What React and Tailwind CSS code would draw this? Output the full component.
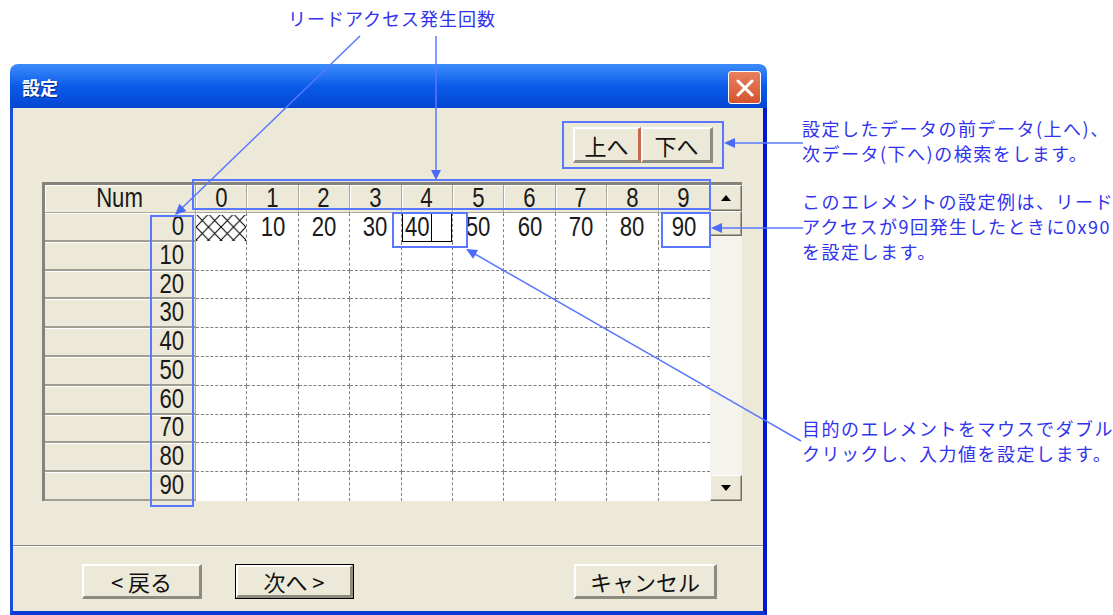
import React from 'react'

const cols = ['0', '1', '2', '3', '4', '5', '6', '7', '8', '9']
const rowLabels = ['0', '10', '20', '30', '40', '50', '60', '70', '80', '90']
const firstRow = ['x', '10', '20', '30', '40', '50', '60', '70', '80', '90']

const raised = 'border-t-2 border-l-2 border-t-white border-l-white border-r-[3px] border-b-[3px] border-r-[#8d8b80] border-b-[#8d8b80] bg-[#ece9d8]'

// the grid text is a narrow bitmap-ish face, squeeze Liberation Sans to match
const Narrow = ({ children, origin = 'origin-center' }) => (
    <span className={'inline-block scale-x-[0.82] ' + origin}>{children}</span>
)

const Hatch = () => (
    <svg width="50" height="28" className="block">
        <defs>
            <pattern id="hatch" width="12.5" height="13" patternUnits="userSpaceOnUse">
                <path d="M0 0 L12.5 13 M12.5 0 L0 13" stroke="#111" strokeWidth="1.2" />
            </pattern>
        </defs>
        <rect x="0" y="1" width="50" height="26" fill="url(#hatch)" />
    </svg>
)

const ScrollBtn = ({ up }) => (
    <div className="flex h-[26px] items-center justify-center border border-t-white border-l-white border-r-[#716f64] border-b-[#716f64] bg-[#ece9d8] shadow-[inset_-1px_-1px_0_#aca899]">
        <svg width="10" height="6">
            {up ? <polygon points="5,0 10,6 0,6" fill="#000" /> : <polygon points="0,0 10,0 5,6" fill="#000" />}
        </svg>
    </div>
)

const DataCell = ({ value, col, last }) => {
    const edges = (col < 9 ? 'border-r ' : '') + (last ? '' : 'border-b')
    if (value === 'x') {
        return (
            <div className={'flex items-center border-dashed border-[#808080] ' + edges}>
                <Hatch />
            </div>
        )
    }
    if (value === '40') {
        return (
            <div className={'flex items-stretch border-dashed border-[#808080] ' + edges}>
                <div className="flex h-full w-full items-center border border-black pl-[2px]">
                    <Narrow origin="origin-left">40</Narrow>
                    <span className="-ml-[4px] h-full w-px bg-black" />
                </div>
            </div>
        )
    }
    return (
        <div className={'flex items-center justify-center border-dashed border-[#808080] ' + edges}>
            <Narrow>{value}</Narrow>
        </div>
    )
}

const Grid = () => (
    <div className="flex w-[700px] border-t-[3px] border-l-[3px] border-[#85847c] font-['Liberation_Sans',sans-serif] text-[27px] leading-none text-[#1a1a1a]">
        <div className="w-[665px]">
            <div className="flex h-[28px]">
                <div className="flex w-[151px] items-center justify-center border-r border-b border-[#aca899] bg-[#ece9d8] shadow-[inset_1px_1px_0_#fff]">
                    <Narrow>Num</Narrow>
                </div>
                <div className="grid w-[514px] grid-cols-10">
                    {cols.map(c => (
                        <div key={c} className="flex items-center justify-center border-r border-b border-[#aca899] bg-[#ece9d8] shadow-[inset_1px_1px_0_#fff]">
                            <Narrow>{c}</Narrow>
                        </div>
                    ))}
                </div>
            </div>
            {rowLabels.map((label, r) => (
                <div key={label} className="flex h-[28.8px]">
                    <div className="flex w-[151px] items-center justify-end border-r border-b-2 border-r-[#aca899] border-b-[#a09e92] bg-[#ece9d8] pr-[11px] shadow-[inset_0_1px_0_#fff]">
                        <Narrow origin="origin-right">{label}</Narrow>
                    </div>
                    <div className="grid w-[514px] grid-cols-10 bg-white">
                        {cols.map((c, i) => (
                            <DataCell key={c} col={i} last={r === 9} value={r === 0 ? firstRow[i] : ''} />
                        ))}
                    </div>
                </div>
            ))}
        </div>
        <div className="flex w-[32px] flex-col bg-[#f4f3ee]">
            <ScrollBtn up />
            <div className="h-[25px] border border-t-white border-l-white border-r-[#716f64] border-b-[#716f64] bg-[#ece9d8] shadow-[inset_-1px_-1px_0_#aca899]" />
            <div className="flex-1" />
            <ScrollBtn />
        </div>
    </div>
)

const Dialog = () => (
    <div className="ml-[10px] w-[757px] shrink-0 font-['Noto_Sans_CJK_JP',sans-serif]">
        <div className="flex h-[44px] items-center justify-between rounded-t-[8px] bg-linear-to-b from-[#3d8cfc] via-[#0a5be9] to-[#0546d2] pl-[12px] pr-[6px] pt-[3px]">
            <span className="text-[18px] font-bold text-white [text-shadow:1px_1px_0_#0a2a8a]">設定</span>
            <div className="flex h-[33px] w-[33px] items-center justify-center rounded-[3px] border border-white bg-linear-to-b from-[#e9805e] to-[#d4532e]">
                <svg width="18" height="18">
                    <path d="M2 2 L16 16 M16 2 L2 16" stroke="#fff" strokeWidth="3" strokeLinecap="round" />
                </svg>
            </div>
        </div>
        <div className="flex h-[507px] flex-col border-l-[3px] border-r-[4px] border-b-[4px] border-l-[#1a4fd8] border-r-[#0019cf] border-b-[#0a3ad4] bg-[#ece9d8]">
            <div className="flex justify-end pr-[50px] pt-[19px] text-[22px] leading-none text-[#111]">
                <div className={'flex h-[36px] w-[68px] items-center justify-center ' + raised + ' border-r-[#c8694c]'}>上へ</div>
                <div className={'flex h-[36px] w-[72px] items-center justify-center ' + raised}>下へ</div>
            </div>
            <div className="ml-[29px] mt-[19px]">
                <Grid />
            </div>
            <div className="mt-[44px] h-[2px] border-t border-b border-t-[#8d8b80] border-b-white" />
            <div className="mt-[17px] flex h-[35px] text-[22px] leading-none text-[#111]">
                <div className={'ml-[69px] flex w-[120px] items-center justify-center ' + raised}>&lt; 戻る</div>
                <div className="ml-[33px] flex w-[119px] border border-black">
                    <div className={'flex flex-1 items-center justify-center ' + raised}>次へ &gt;</div>
                </div>
                <div className={'ml-auto mr-[46px] flex w-[143px] items-center justify-center ' + raised}>キャンセル</div>
            </div>
        </div>
    </div>
)

const Notes = () => (
    <div className="ml-[35px] flex shrink-0 flex-col whitespace-nowrap pt-[52px] font-['Noto_Sans_CJK_JP',sans-serif] text-[18px] leading-[25px] tracking-[1.5px] text-[#3232ee]">
        <p>設定したデータの前データ(上へ)、</p>
        <p>次データ(下へ)の検索をします。</p>
        <p className="mt-[23px]">このエレメントの設定例は、リード</p>
        <p>アクセスが9回発生したときに0x90</p>
        <p>を設定します。</p>
        <p className="mt-[152px]">目的のエレメントをマウスでダブル</p>
        <p>クリックし、入力値を設定します。</p>
    </div>
)

const Callouts = () => (
    <svg className="pointer-events-none absolute inset-0" width="1113" height="615">
        <g fill="none" stroke="#5a78ff" strokeWidth="2">
            <rect x="193" y="180" width="517" height="29" />
            <rect x="151" y="216" width="42" height="290" />
            <rect x="393" y="213" width="74" height="34" />
            <rect x="662" y="213" width="48" height="34" />
            <rect x="563" y="122" width="160" height="46" />
        </g>
        <g stroke="#5a78ff" strokeWidth="1.5">
            <line x1="436" y1="36" x2="436" y2="171" />
            <line x1="360" y1="36" x2="182" y2="208" />
            <line x1="735" y1="143" x2="803" y2="143" />
            <line x1="722" y1="228" x2="803" y2="228" />
            <line x1="801" y1="441" x2="475" y2="254" />
        </g>
        <g fill="#4a6af7">
            <polygon points="436,180 431,170 441,170" />
            <polygon points="175,215 186.4,211 179.4,203.8" />
            <polygon points="724,143 735,138 735,148" />
            <polygon points="711,228 722,223 722,233" />
            <polygon points="466,249 478,250.1 473.1,258.8" />
        </g>
    </svg>
)

const App = () => {
    return (
        <div className="relative h-[615px] w-[1113px] overflow-hidden bg-white">
            <div className="h-[64px] pl-[288px] pt-[6px] font-['Noto_Sans_CJK_JP',sans-serif] text-[18px] leading-[25px] tracking-[1px] text-[#3232ee]">
                リードアクセス発生回数
            </div>
            <div className="flex">
                <Dialog />
                <Notes />
            </div>
            <Callouts />
        </div>
    )
}

export default App
